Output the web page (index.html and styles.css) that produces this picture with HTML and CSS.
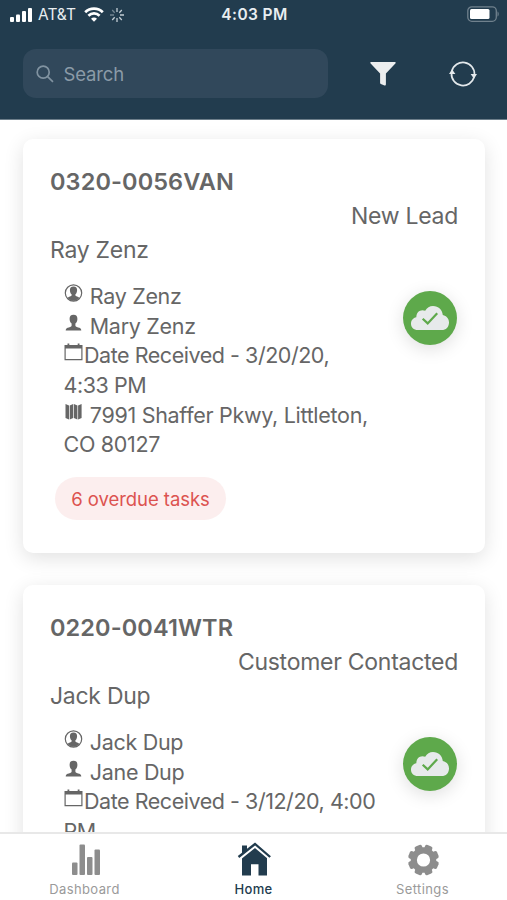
FILE: index.html
```html
<!DOCTYPE html>
<html lang="en">
<head>
<meta charset="utf-8">
<title>Leads</title>
<link rel="stylesheet" href="styles.css">
</head>
<body>
<svg class="defs" width="0" height="0" aria-hidden="true">
  <symbol id="contact" viewBox="0 0 18 18">
    <circle cx="9" cy="9" r="8.2" fill="none" stroke="currentColor" stroke-width="1.2"/>
    <path d="M9 2.500C6.500 2.500 5.300 4 5.400 6.200c.1 2 .7 3.300 1.700 4.100v1.200c-.2.900-2.800 1-4 2.400C5 15.700 6.900 16.800 9 16.800s4-1.100 5.900-2.900c-1.200-1.400-3.800-1.500-4-2.400v-1.200c1-.8 1.600-2.100 1.700-4.100C12.700 4 11.500 2.500 9 2.500z" fill="currentColor"/>
  </symbol>
  <symbol id="person" viewBox="0 0 18 18">
    <path d="M9 .8C6.300.8 5 2.400 5.100 4.900c.1 2.200.8 3.600 2 4.500v2.400c-.2 1.100-2.400 1.500-4 2-1.200.5-1.800 1.300-1.900 2.700h15.600c-.1-1.400-.7-2.200-1.900-2.700-1.600-.5-3.800-.9-4-2V9.400c1.200-.9 1.900-2.300 2-4.500C13 2.400 11.700.8 9 .8z" fill="currentColor"/>
  </symbol>
  <symbol id="calendar" viewBox="0 0 18 18">
    <path d="M.6 2.600h16.800v14H.6z" fill="none" stroke="currentColor" stroke-width="1.200"/>
    <path d="M.5 2.200h17v3.400H.5zM3 .5h1.800v3H3zM13.200.5H15v3h-1.800z" fill="currentColor"/>
  </symbol>
  <symbol id="map" viewBox="0 0 18 18">
    <path d="M1 1l3.500 1.500v14L1 15zM5.200 2.500L8.700 1v14l-3.500 1.500zM9.400 1l3.500 1.500v14L9.400 15zM13.600 2.500L17.100 1v14l-3.500 1.500z" fill="currentColor"/>
  </symbol>
  <symbol id="cloud" viewBox="0 0 40 26">
    <path d="M8 25C3.500 25 1 22.300 1 18.700c0-3.300 2.200-5.700 5.300-6.400C6.500 7.500 9 5.300 12.400 5.200c1 0 2 .2 2.800.6C17 2.600 19.600 1 23 1c5.600 0 9.100 3.700 9.800 8.900 3.900.8 6.200 3.700 6.200 7.500 0 4.500-3 7.600-7.300 7.600z" fill="#e7eaeb"/>
    <path d="M12.700 13.700l5 4.700 9.500-10.200" fill="none" stroke="#5ea94b" stroke-width="2.200"/>
  </symbol>
</svg>
<div class="phone">
  <header class="top">
    <div class="status">
      <div class="carrier">
        <svg width="23" height="14" viewBox="0 0 23 14" fill="#fff"><rect x="0" y="9" width="4" height="5" rx="1"/><rect x="6" y="6.500" width="4" height="7.500" rx="1"/><rect x="12" y="3" width="4" height="11" rx="1"/><rect x="18" y="0" width="4" height="14" rx="1"/></svg>
        <span class="att">AT&amp;T</span>
        <svg width="20" height="15" viewBox="0 0 20 15" fill="none" stroke="#fff" stroke-width="2.700"><path d="M1.200 5.300C6 .4 14 .4 18.800 5.300M4.400 8.700c3.200-3 8-3 11.200 0"/><path d="M10 14.700l-3-3c1.700-1.500 4.300-1.500 6 0z" fill="#fff" stroke="none"/></svg>
        <svg class="spin" width="14" height="14" viewBox="0 0 14 14" stroke="#c3cdd4" stroke-width="1.300"><path d="M7 0v4M7 10v4M10 7h4M9.300 4.700l2.500-2.700M9.300 9.300l2.500 2.700M4.700 9.300L2.200 12"/><path d="M0 7h4M4.700 4.700L2.200 2" opacity=".5"/></svg>
      </div>
      <div class="time">4:03 PM</div>
      <svg class="battery" width="32" height="17" viewBox="0 0 32 17"><rect x=".8" y=".8" width="28.500" height="14.500" rx="4" fill="none" stroke="#70818d" stroke-width="1.300"/><rect x="3" y="3" width="19.500" height="10" rx="1.500" fill="#fff"/><path d="M30.600 5.500c1.300.6 1.300 4.500 0 5z" fill="#8796a0"/></svg>
    </div>
    <div class="tools">
      <div class="search">
        <svg width="18" height="18" viewBox="0 0 18 18" fill="none" stroke="#8193a1" stroke-width="1.700"><circle cx="7.200" cy="7.200" r="6"/><path d="M11.600 11.600l5.400 5.200"/></svg>
        <span>Search</span>
      </div>
      <svg class="filter" width="26" height="24" viewBox="0 0 26 24" fill="#eceeef"><path d="M1 0h24q1 .1.600 1.200L15.900 11.500v10.800q0 1.500-1.400 1.100l-3.700-1.300q-.7-.3-.7-1V11.500L.4 1.200Q0 .1 1 0z"/></svg>
      <svg class="refresh" width="28" height="26" viewBox="0 0 28 26" fill="none" stroke="#e4e9ec" stroke-width="1.700"><path d="M2.900 10A11.500 11.500 0 0 1 25.500 13.500M25.100 16A11.500 11.500 0 0 1 2.500 12.500"/><path d="M0 13l3-4.800L6.400 13zM21.600 13H28l-3 4.800z" fill="#e4e9ec" stroke="none"/></svg>
    </div>
  </header>
  <main class="list">
    <article class="card">
      <h2>0320-0056VAN</h2>
      <div class="stage">New Lead</div>
      <div class="name">Ray Zenz</div>
      <div class="body">
        <div class="details">
          <div><svg class="ico"><use href="#contact"/></svg> Ray Zenz</div>
          <div><svg class="ico"><use href="#person"/></svg> Mary Zenz</div>
          <div class="date"><svg class="ico"><use href="#calendar"/></svg>Date Received - 3/20/20,<br>4:33 PM</div>
          <div><svg class="ico"><use href="#map"/></svg> 7991 Shaffer Pkwy, Littleton,<br>CO 80127</div>
        </div>
        <div class="sync"><svg width="40" height="26"><use href="#cloud"/></svg></div>
      </div>
      <div class="pill">6 overdue tasks</div>
    </article>
    <article class="card">
      <h2>0220-0041WTR</h2>
      <div class="stage">Customer Contacted</div>
      <div class="name">Jack Dup</div>
      <div class="body">
        <div class="details">
          <div><svg class="ico"><use href="#contact"/></svg> Jack Dup</div>
          <div><svg class="ico"><use href="#person"/></svg> Jane Dup</div>
          <div class="date"><svg class="ico"><use href="#calendar"/></svg>Date Received - 3/12/20, 4:00<br>PM</div>
        </div>
        <div class="sync"><svg width="40" height="26"><use href="#cloud"/></svg></div>
      </div>
    </article>
  </main>
  <nav class="tabs">
    <div class="tab">
      <svg width="34" height="34" viewBox="0 0 34 34" fill="#8d8d8d"><rect x="4" y="20.500" width="5.500" height="12.500" rx="1"/><rect x="11.500" y="2.500" width="5.500" height="30.500" rx="1"/><rect x="19" y="15" width="5.500" height="18" rx="1"/><rect x="26.500" y="7.500" width="5.500" height="25.500" rx="1"/></svg>
      <span>Dashboard</span>
    </div>
    <div class="tab on">
      <svg width="34" height="34" viewBox="0 0 34 34"><path d="M5 16V3.500h5v5l7-5.800L30 13v20.500h-8.500V22.300h-7.500v11.200H5z" fill="#223c4e"/><path d="M1.800 17L18 4.100l15.200 12.700" fill="none" stroke="#fff" stroke-width="3"/><path d="M1.500 15L18 2l15.200 13" fill="none" stroke="#223c4e" stroke-width="2.300"/></svg>
      <span>Home</span>
    </div>
    <div class="tab">
      <svg width="34" height="34" viewBox="-17.500 -18 34 34"><g fill="#8d8d8d"><circle r="12.800"/><rect x="-3.900" y="-15.500" width="7.800" height="31" rx="2" transform="rotate(22.500)"/><rect x="-3.900" y="-15.500" width="7.800" height="31" rx="2" transform="rotate(67.500)"/><rect x="-3.900" y="-15.500" width="7.800" height="31" rx="2" transform="rotate(112.500)"/><rect x="-3.900" y="-15.500" width="7.800" height="31" rx="2" transform="rotate(157.500)"/></g><circle r="6.600" fill="#fff"/></svg>
      <span>Settings</span>
    </div>
  </nav>
</div>
</body>
</html>
```
FILE: styles.css
```css
* { box-sizing: border-box; }
body { margin: 0; background: #fff; color: #666; font-family: Inter, "Liberation Sans", sans-serif; }
.defs { display: block; height: 0; }
.phone { width: 507px; height: 900px; display: flex; flex-direction: column; overflow: hidden; }
.top { height: 120px; flex: none; background: #223c4e; border-bottom: 1px solid #6d7e8a; }
.status { height: 29px; display: grid; grid-template-columns: 1fr auto 1fr; align-items: center; padding: 0 8px 0 10px; color: #e9eef1; }
.carrier { display: flex; align-items: center; }
.att { font-size: 15.5px; margin: 0 8px 0 5px; }
.spin { margin-left: 6px; }
.time { font-size: 15.5px; font-weight: 600; letter-spacing: .4px; }
.battery { justify-self: end; }
.tools { display: flex; align-items: center; padding: 20px 30px 0 23px; }
.search { width: 305px; height: 49px; border-radius: 13px; background: #31485b; display: flex; align-items: center; gap: 9.5px; padding-left: 13px; font-size: 18.5px; letter-spacing: -.15px; color: #8b9ba8; }
.filter { margin-left: 42px; }
.refresh { margin-left: auto; }
.list { flex: 1; min-height: 0; overflow: hidden; padding: 19px 22px 0 23px; }
.card { height: 414px; margin-bottom: 32px; padding: 26px 27px 0; border-radius: 10px; background: #fff; box-shadow: 0 5px 20px rgba(0, 0, 0, .12); }
h2 { margin: 0; font-size: 23.5px; font-weight: 600; line-height: 34px; letter-spacing: .1px; }
.stage, .name { font-size: 23px; line-height: 34px; letter-spacing: -.27px; }
.stage { text-align: right; }
.body { display: flex; justify-content: space-between; align-items: flex-start; padding: 15px 1px 0 13.5px; }
.details { font-size: 21.5px; line-height: 29.65px; letter-spacing: -.3px; white-space: nowrap; }
.date { letter-spacing: -.46px; }
.ico { width: 19px; height: 18px; margin-right: 1.5px; vertical-align: 2px; }
.sync { width: 54px; height: 54px; margin-top: 9px; margin-left: -30px; border-radius: 50%; background: #5ea94b; display: flex; align-items: center; justify-content: center; box-shadow: 0 4px 18px rgba(0, 0, 0, .13); }
.pill { width: 171px; height: 43px; margin: 17px 0 0 5px; border-radius: 22px; background: #fceeee; color: #dc5350; font-size: 18.5px; letter-spacing: -.05px; line-height: 44px; text-align: center; white-space: nowrap; }
.tabs { height: 68px; flex: none; display: grid; grid-template-columns: repeat(3, 1fr); border-top: 2px solid #e8e8e8; background: #fff; }
.tab { display: flex; flex-direction: column; align-items: center; padding-top: 8px; font-size: 13px; line-height: 18px; color: #9a9a9a; }
.tab span { margin-top: 3.500px; letter-spacing: .38px; }
.tab.on { color: #223c4e; font-weight: 500; }
```
